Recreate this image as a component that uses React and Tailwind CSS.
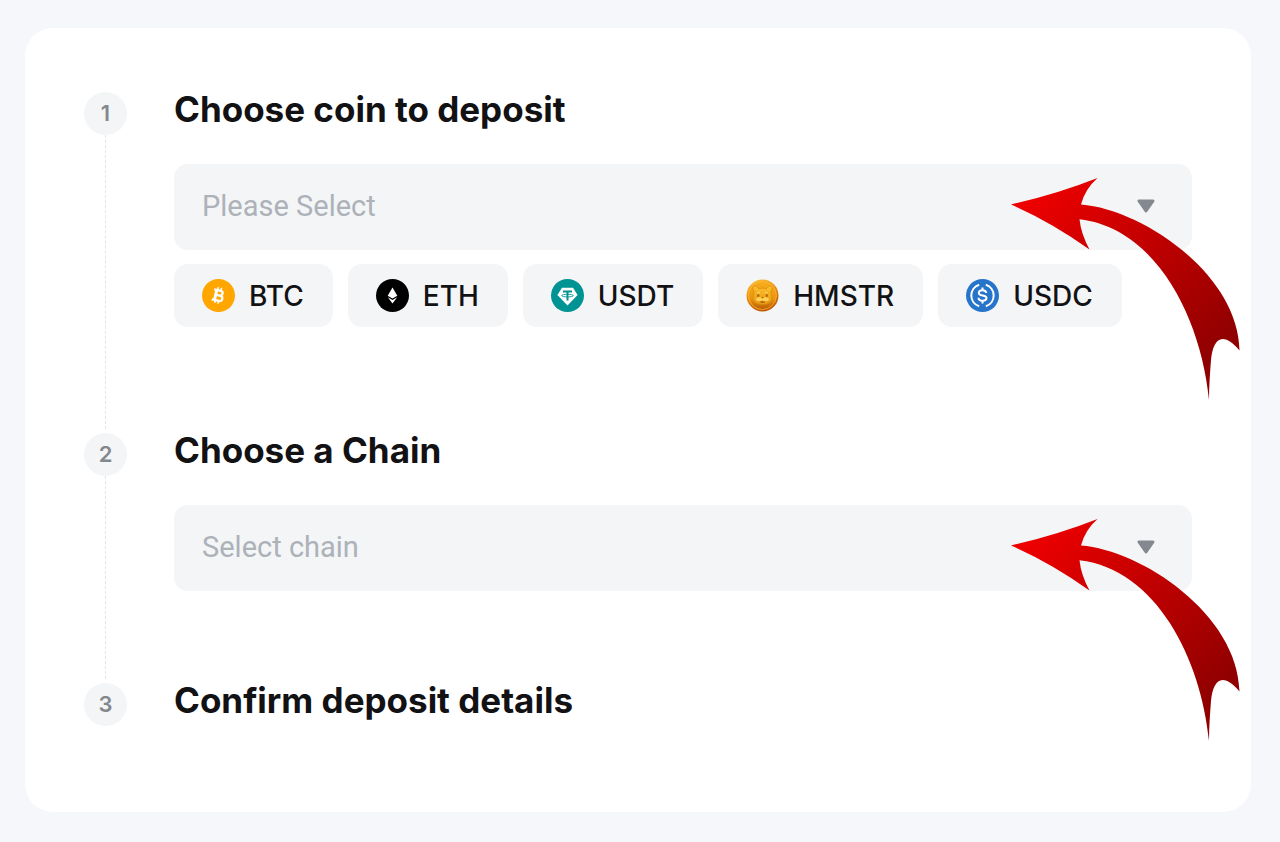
import React, { useState } from "react";

const COINS = [
  { symbol: "BTC", Icon: BtcIcon },
  { symbol: "ETH", Icon: EthIcon },
  { symbol: "USDT", Icon: UsdtIcon },
  { symbol: "HMSTR", Icon: HmstrIcon },
  { symbol: "USDC", Icon: UsdcIcon },
];

const CHAINS = ["Bitcoin", "Ethereum", "Tron", "TON"];

function BtcIcon() {
  return (
    <svg viewBox="0 0 33 33" className="size-[33px] shrink-0" aria-hidden="true">
      <circle cx="16.5" cy="16.5" r="16.5" fill="#ffa600" />
      <g transform="rotate(13 16.5 16.5)" fill="none" stroke="#fff" strokeWidth="2.3">
        <path d="M10.8 11.4h6.8a2.4 2.4 0 0 1 0 4.900h-4.200h4.800a2.700 2.700 0 0 1 0 5.400H10.800" />
        <path d="M13.6 11v11" strokeWidth="3" />
        <path d="M14.4 8.4v2.8M17.8 8.4v2.8M14.4 21.6v3M17.8 21.6v3" strokeWidth="1.6" />
      </g>
    </svg>
  );
}

function EthIcon() {
  return (
    <svg viewBox="0 0 33 33" className="size-[33px] shrink-0" aria-hidden="true">
      <circle cx="16.5" cy="16.5" r="16.5" fill="#000" />
      <path d="M16.5 8.6l4.8 8.2-4.8 2.6-4.8-2.6z" fill="#fff" />
      <path d="M11.8 18.3l4.7 2.6 4.7-2.6-4.7 6.2z" fill="#fff" />
    </svg>
  );
}

function UsdtIcon() {
  return (
    <svg viewBox="0 0 33 33" className="size-[33px] shrink-0" aria-hidden="true">
      <circle cx="16.5" cy="16.5" r="16.5" fill="#009393" />
      <path d="M11 8.8h11l4.6 7.2-10.1 10.4L6.4 16z" fill="#fff" />
      <path d="M12 12.6h9M16.5 12.6v9" stroke="#009393" strokeWidth="2" fill="none" />
      <ellipse cx="16.5" cy="16.6" rx="5.8" ry="1.3" stroke="#009393" strokeWidth="0.9" fill="none" />
    </svg>
  );
}

function HmstrIcon() {
  return (
    <svg viewBox="0 0 33 33" className="size-[33px] shrink-0" aria-hidden="true">
      <defs>
        <linearGradient id="coin-rim" x1="0" y1="0" x2="0.4" y2="1">
          <stop offset="0" stopColor="#ffc83a" />
          <stop offset="0.55" stopColor="#e88710" />
          <stop offset="1" stopColor="#c25a05" />
        </linearGradient>
        <linearGradient id="coin-face" x1="0" y1="0" x2="0" y2="1">
          <stop offset="0" stopColor="#f8ae1c" />
          <stop offset="0.6" stopColor="#ea950f" />
          <stop offset="1" stopColor="#b95c04" />
        </linearGradient>
        <linearGradient id="coin-head" x1="0" y1="0" x2="0" y2="1">
          <stop offset="0" stopColor="#fcc02f" />
          <stop offset="1" stopColor="#e8960f" />
        </linearGradient>
      </defs>
      <circle cx="16.5" cy="16.5" r="16" fill="url(#coin-rim)" />
      <circle cx="16.5" cy="16.5" r="14" fill="url(#coin-face)" stroke="#fcbf3c" strokeWidth="0.7" />
      <path
        d="M8.5 13c-2.4-2.6-2-6 .4-6 1.8 0 3 1.4 3.8 2.8 2.4-.8 5.2-.8 7.6 0 .8-1.4 2-2.8 3.8-2.8 2.4 0 2.8 3.4.4 6 1.4 3 2 6.600.8 8.800-1.600 2.800-5.200 3.800-8.800 3.800s-7.200-1-8.800-3.800c-1.200-2.200-.6-5.800.8-8.800z"
        fill="url(#coin-head)"
        stroke="#d98a0c"
        strokeWidth="0.7"
      />
      <path d="M11 14.2c.8-1 2.400-1 3.200 0M18.800 14.200c.8-1 2.400-1 3.200 0" stroke="#ffe071" strokeWidth="1" fill="none" />
      <ellipse cx="12.2" cy="16.6" rx="1.2" ry="1.6" fill="#b96a06" />
      <ellipse cx="20.8" cy="16.6" rx="1.2" ry="1.6" fill="#b96a06" />
      <ellipse cx="13.4" cy="20.2" rx="3.2" ry="2" fill="#ffd257" />
      <ellipse cx="19.6" cy="20.2" rx="3.2" ry="2" fill="#ffd257" />
      <path d="M15.2 18h2.6l-1.3 1.5z" fill="#a85b04" />
      <path d="M13.5 22.6c2 1.6 4 1.6 6 0z" fill="#94500a" />
    </svg>
  );
}

function UsdcIcon() {
  return (
    <svg viewBox="0 0 33 33" className="size-[33px] shrink-0" aria-hidden="true">
      <circle cx="16.5" cy="16.5" r="16.5" fill="#2775ca" />
      <g fill="none" stroke="#fff" strokeWidth="2">
        <path d="M13.2 5.8a11.2 11.2 0 0 0 0 21.4" />
        <path d="M19.8 5.8a11.2 11.2 0 0 1 0 21.4" />
        <path d="M20.3 14c-.2-1.9-1.6-2.8-3.8-2.8-2.3 0-3.7 1-3.7 2.7 0 3.7 7.7 1.5 7.7 5.2 0 1.7-1.6 2.7-3.9 2.7-2.4 0-4-1-4.1-3" />
        <path d="M16.5 8.6v2.8M16.5 21.6v2.8" />
      </g>
    </svg>
  );
}

function PointerArrow({ id, className }) {
  return (
    <svg
      viewBox="0 0 229 222"
      className={`pointer-events-none absolute h-[222px] w-[229px] ${className}`}
      aria-hidden="true"
    >
      <defs>
        <linearGradient id={id} gradientUnits="userSpaceOnUse" x1="20" y1="10" x2="195" y2="185">
          <stop offset="0" stopColor="#f00000" />
          <stop offset="1" stopColor="#900000" />
        </linearGradient>
      </defs>
      <path
        d="M0 26.5Q46 16 86.500 0Q74 11 70 26.500C130 31 227 95 228.500 172.500C222 165 217 161 211.700 161C205 161 201 170 200 182C199 195 198 208 198 222C190 140 145 50 68.500 41.300Q70 56 78.500 71.500Q40 44 0 26.500Z"
        fill={`url(#${id})`}
      />
    </svg>
  );
}

function Step({ number, title, last, children }) {
  return (
    <li className="flex gap-[47px]">
      <div className="flex shrink-0 flex-col items-center">
        <span className="flex size-[43px] items-center justify-center rounded-full bg-[#f3f5f7] text-[22px] font-semibold text-[#84878c]">
          {number}
        </span>
        {!last && <div className="mb-1 w-px flex-1 border-l border-dashed border-[#e3e5e8]" />}
      </div>
      <div className="min-w-0 flex-1">
        <h2 className="text-[35px] leading-[34px] font-bold text-[#121214]">{title}</h2>
        {children}
      </div>
    </li>
  );
}

function SelectField({ label, placeholder, options, value, onChange }) {
  return (
    <div className="relative mt-[38px]">
      <select
        aria-label={label}
        value={value}
        onChange={(e) => onChange(e.target.value)}
        className={`h-[86px] w-full cursor-pointer appearance-none rounded-[14px] bg-[#f3f5f7] pr-20 pl-7 font-['Roboto',sans-serif] text-[29px] outline-none ${value ? "text-[#121214]" : "text-[#adb1b8]"}`}
      >
        <option value="" disabled>
          {placeholder}
        </option>
        {options.map((option) => (
          <option key={option} value={option}>
            {option}
          </option>
        ))}
      </select>
      <svg
        viewBox="0 0 18 14"
        className="pointer-events-none absolute top-[35px] right-[37px] h-3.5 w-[18px]"
        aria-hidden="true"
      >
        <path d="M2 2h14L9 12z" fill="#84888f" stroke="#84888f" strokeWidth="3" strokeLinejoin="round" />
      </svg>
      <PointerArrow id={`arrow-${label}`} className="top-3.5 -right-12" />
    </div>
  );
}

export default function App() {
  const [coin, setCoin] = useState("");
  const [chain, setChain] = useState("");

  return (
    <main className="min-h-screen bg-[#f5f7fb] pt-7 pr-[29px] pb-7 pl-[25px] font-['Inter',sans-serif]">
      <ol className="rounded-[28px] bg-white px-[59px] pt-16 pb-[86px]">
        <Step number={1} title="Choose coin to deposit">
          <SelectField
            label="coin"
            placeholder="Please Select"
            options={COINS.map((c) => c.symbol)}
            value={coin}
            onChange={setCoin}
          />
          <div className="mt-3.5 mb-[106px] flex flex-wrap gap-[15px]">
            {COINS.map(({ symbol, Icon }) => (
              <button
                key={symbol}
                type="button"
                onClick={() => setCoin(symbol)}
                className="flex h-[63px] cursor-pointer items-center gap-3.5 rounded-[14px] bg-[#f3f5f7] pr-[29px] pl-7 text-[28px] font-medium text-[#121214]"
              >
                <Icon />
                {symbol}
              </button>
            ))}
          </div>
        </Step>
        <Step number={2} title="Choose a Chain">
          <div className="mb-[92px]">
            <SelectField
              label="chain"
              placeholder="Select chain"
              options={CHAINS}
              value={chain}
              onChange={setChain}
            />
          </div>
        </Step>
        <Step number={3} title="Confirm deposit details" last />
      </ol>
    </main>
  );
}
